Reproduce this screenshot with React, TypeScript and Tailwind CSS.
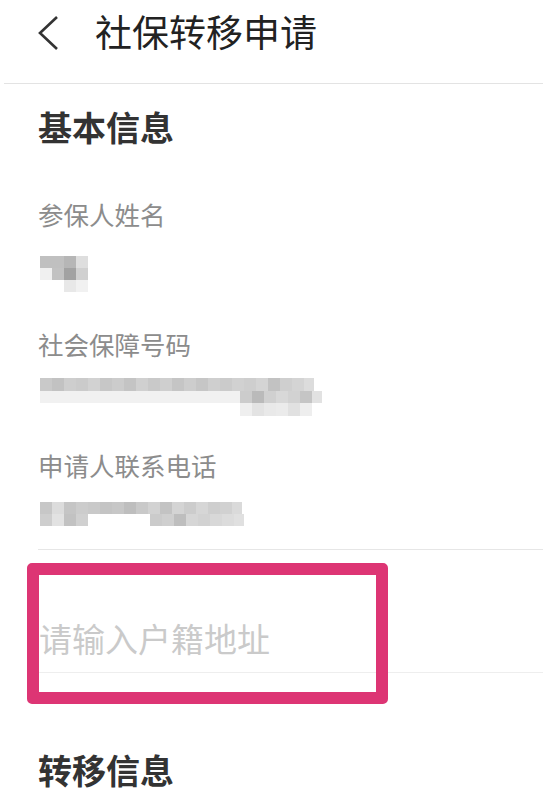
import React from "react";

type Cell = [number, string];
type Row = { offset: number; cells: Cell[] };

function Pixelated({ rows, h }: { rows: Row[]; h: number }) {
  return (
    <div className="flex flex-col">
      {rows.map((r, i) => (
        <div key={i} className="flex" style={{ height: h, paddingLeft: r.offset }}>
          {r.cells.map((c, j) => (
            <div key={j} style={{ width: c[0], height: h, background: c[1] }} />
          ))}
        </div>
      ))}
    </div>
  );
}

const nameRows: Row[] = [
  { offset: 2, cells: [[24, "#c0c0c0"], [12, "#b6b6b6"], [12, "#dedede"]] },
  { offset: 2, cells: [[12, "#f0f0f0"], [12, "#c2c2c2"], [12, "#a2a2a2"], [12, "#d0d0d0"]] },
  { offset: 26, cells: [[12, "#e8e8e8"], [12, "#f1f1f1"]] },
];

const idRows: Row[] = [
  {
    offset: 2,
    cells: [
      [12, "#c9c9c9"], [12, "#c2c2c2"], [12, "#cecece"], [12, "#cbcbcb"], [12, "#d2d2d2"],
      [12, "#c7c7c7"], [12, "#cccccc"], [12, "#c4c4c4"], [12, "#d0d0d0"], [12, "#c9c9c9"],
      [12, "#cfcfcf"], [12, "#c5c5c5"], [12, "#cdcdcd"], [12, "#c6c6c6"], [12, "#cfcfcf"],
      [12, "#cbcbcb"], [12, "#d1d1d1"], [12, "#cecece"], [12, "#d4d4d4"], [12, "#c2c2c2"],
      [12, "#cfcfcf"], [12, "#d4d4d4"], [10, "#dcdcdc"],
    ],
  },
  {
    offset: 2,
    cells: [
      [200, "#f1f1f1"], [12, "#cccccc"], [12, "#bababa"], [12, "#d0d0d0"], [12, "#d8d8d8"],
      [12, "#d2d2d2"], [12, "#c5c5c5"], [10, "#e2e2e2"],
    ],
  },
  { offset: 202, cells: [[12, "#efefef"], [12, "#e3e3e3"], [12, "#e9e9e9"], [12, "#ebebeb"], [12, "#e1e1e1"], [12, "#eeeeee"]] },
];

const phoneRows: Row[] = [
  {
    offset: 2,
    cells: [
      [12, "#c7c7c7"], [12, "#dcdcdc"], [12, "#c5c5c5"], [12, "#cccccc"], [12, "#c9c9c9"],
      [12, "#c4c4c4"], [12, "#c7c7c7"], [12, "#bebebe"], [12, "#c9c9c9"], [12, "#d2d2d2"],
      [12, "#c3c3c3"], [12, "#d4d4d4"], [12, "#cccccc"], [12, "#d6d6d6"], [12, "#cecece"],
      [12, "#d1d1d1"], [10, "#dadada"],
    ],
  },
  {
    offset: 2,
    cells: [
      [12, "#cecece"], [12, "#e2e2e2"], [12, "#c2c2c2"], [12, "#d0d0d0"], [62, "#ffffff"],
      [12, "#cbcbcb"], [12, "#cfcfcf"], [12, "#bebebe"], [12, "#d6d6d6"], [12, "#d2d2d2"],
      [12, "#d8d8d8"], [12, "#dcdcdc"], [10, "#e0e0e0"],
    ],
  },
];

export default function App() {
  return (
    <div
      className="relative w-[543px] h-[800px] overflow-hidden bg-white"
      style={{ fontFamily: '"Noto Sans CJK SC", "Noto Sans", sans-serif' }}
    >
      {/* Header */}
      <div className="flex items-start h-[84px] pt-[13px] ml-[4px] border-b border-[#e3e3e3]">
        <svg width="26" height="36" viewBox="0 0 26 36" className="ml-[32px] mt-[2px]">
          <polyline points="21,2 4,18 21,34" fill="none" stroke="#333" strokeWidth="2.6" />
        </svg>
        <div className="ml-[33px] text-[37px] leading-[36px] text-[#222]">社保转移申请</div>
      </div>

      <div className="pl-[38px]">
        <div className="mt-[26px] text-[34px] leading-[33px] font-bold text-[#333]">基本信息</div>

        <div className="mt-[58px] text-[25.5px] leading-[25px] text-[#8c8c8c]">参保人姓名</div>
        <div className="mt-[30px]">
          <Pixelated rows={nameRows} h={12} />
        </div>

        <div className="mt-[39px] text-[25.5px] leading-[25px] text-[#8c8c8c]">社会保障号码</div>
        <div className="mt-[22px]">
          <Pixelated rows={idRows} h={12.5} />
        </div>

        <div className="mt-[36px] text-[25.5px] leading-[25px] text-[#8c8c8c]">申请人联系电话</div>
        <div className="mt-[25px]">
          <Pixelated rows={phoneRows} h={12} />
        </div>

        <div className="mt-[23px] border-b border-[#e6e6e6]" />

        <div className="pt-[72px] h-[123px] border-b border-[#eeeeee]">
          <div className="text-[33px] leading-[32px] text-[#cacaca] ml-[1px]">请输入户籍地址</div>
        </div>

        <div className="mt-[80px] text-[34px] leading-[33px] font-bold text-[#333]">转移信息</div>
      </div>

      {/* annotation highlight */}
      <div className="absolute left-[27px] top-[563px] w-[361px] h-[141px] border-[12px] border-[#dd3574] rounded-[5px]" />
    </div>
  );
}
